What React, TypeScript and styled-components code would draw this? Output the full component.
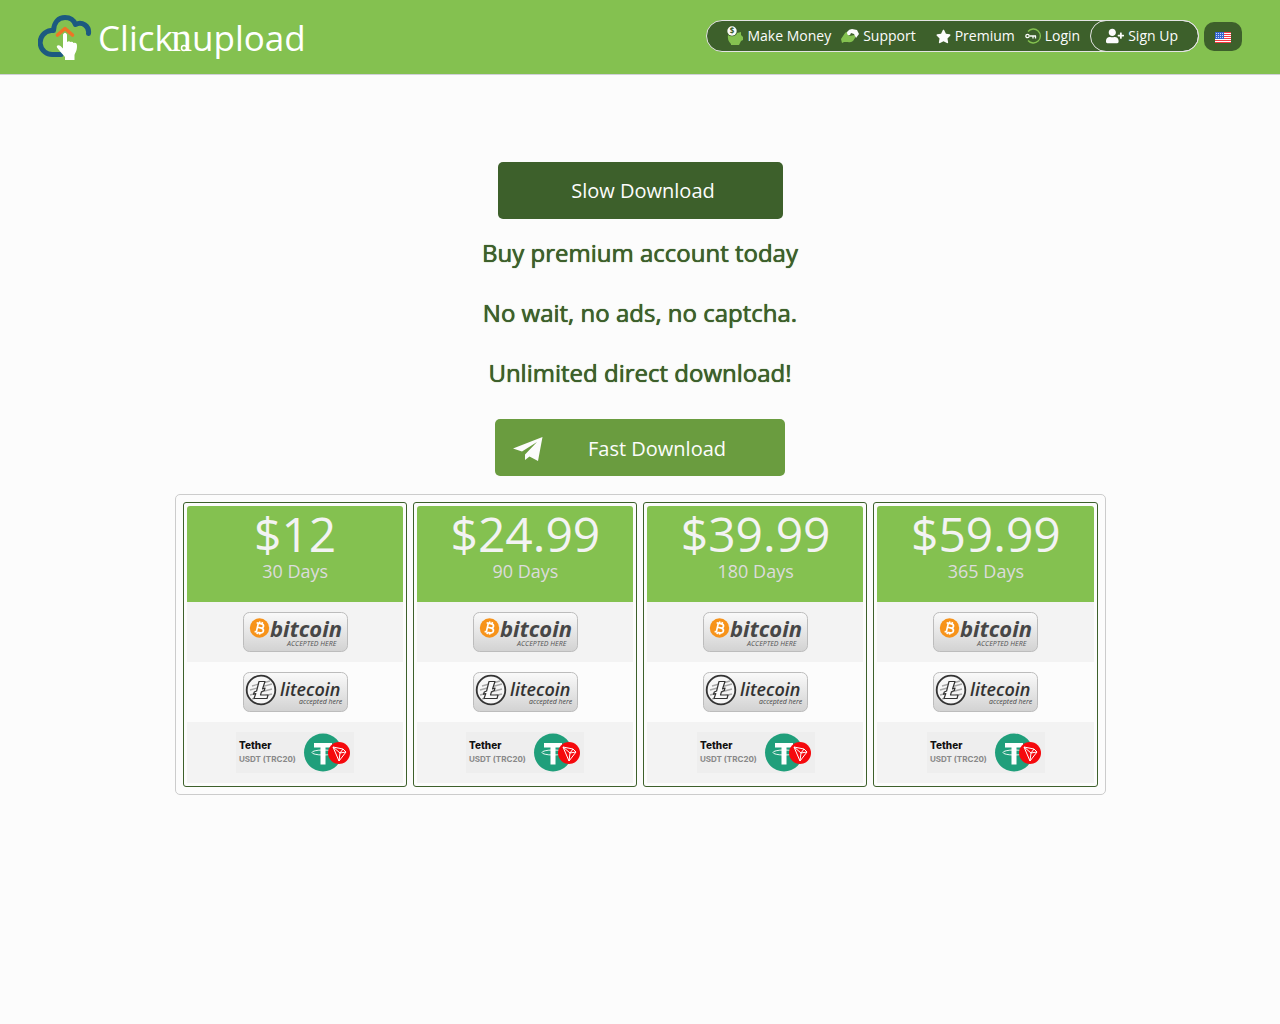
import React from "react";
import styled, { createGlobalStyle } from "styled-components";
import { FaStar, FaUserPlus } from "react-icons/fa";

const GlobalStyle = createGlobalStyle`
  * { box-sizing: border-box; }
  body {
    margin: 0;
    background: #fcfcfc;
    color: #3d602b;
    font-family: "Open Sans", "Liberation Sans", sans-serif;
    font-size: 14px;
  }
  svg { display: block; flex: none; }
`;

const Header = styled.header`
  display: flex;
  align-items: center;
  justify-content: space-between;
  height: 75px;
  padding: 0 38px 2px;
  background: #84c150;
  border-bottom: 1px solid #d0d0d8;
`;

const Bar = styled.div`
  display: flex;
  align-items: center;
  gap: 5px;
`;

const Nav = styled.nav`
  display: flex;
  align-items: center;
  height: 32px;
  padding-left: 20px;
  background: #3d602b;
  border: 1px solid #e4e4e4;
  border-radius: 16px;
`;

const NavLink = styled.a<{ $gap?: number }>`
  display: flex;
  align-items: center;
  gap: 4px;
  margin-right: ${(p) => p.$gap ?? 10}px;
  color: #fcfcfc;
  line-height: 20px;
  text-decoration: none;
`;

const SignUp = styled(NavLink)`
  height: 32px;
  margin: -1px;
  padding: 0 20px 0 15px;
  border: 1px solid #e4e4e4;
  border-radius: 16px;
`;

const LangButton = styled.button`
  display: flex;
  align-items: center;
  justify-content: center;
  width: 38px;
  height: 29px;
  margin-top: 1px;
  padding: 2px 0 0;
  border: 0;
  border-radius: 10px;
  background: #3d602b;
`;

const Main = styled.main`
  display: flex;
  flex-direction: column;
  align-items: center;
  padding: 87px 20px 40px;
`;

const SlowButton = styled.button`
  width: 285px;
  height: 57px;
  padding: 0 0 0 6px;
  border: 0;
  border-radius: 5px;
  background: #3d602b;
  color: #fcfcfc;
  font: 400 20px "Open Sans", sans-serif;
`;

const FastButton = styled(SlowButton)`
  display: flex;
  align-items: center;
  gap: 45px;
  width: 290px;
  padding: 2px 18px 0;
  background: #6a9c3f;
`;

const Pitch = styled.h2`
  margin: 0;
  padding: 4px 0 16px;
  font: 400 24px/60px "Open Sans", sans-serif;
  text-align: center;
  text-shadow: 0 0 1px currentColor, 0 0 0 currentColor;
`;

const Line = styled.span`
  display: block;
`;

const Plans = styled.section`
  display: grid;
  grid-template-columns: repeat(4, 1fr);
  gap: 6px;
  width: 100%;
  max-width: 931px;
  margin-top: 18px;
  padding: 7px;
  border: 1px solid #ccc;
  border-radius: 5px;
`;

const Plan = styled.article`
  padding: 3px;
  border: 1px solid #3d602b;
  border-radius: 3px;
`;

const PlanHead = styled.header`
  height: 96px;
  padding-left: 1px;
  border-radius: 3px 3px 0 0;
  background: #84c150;
  text-align: center;
`;

const Price = styled.div`
  color: #f3f3f3;
  font: 400 48px/56px "Open Sans", sans-serif;
`;

const Days = styled.div`
  color: #dcdcdc;
  font: 400 18px/18px "Open Sans", sans-serif;
`;

const PayButton = styled.button`
  display: flex;
  align-items: center;
  justify-content: center;
  width: 100%;
  height: 60px;
  padding: 0 0 0 1px;
  border: 0;
  background: #f3f3f3;
  &:nth-of-type(2) { background: #fcfcfc; }
  &:last-of-type { height: 61px; }
`;

const Logo = () => (
  <svg width="270" height="50" viewBox="38 11 270 50" role="img" aria-label="Clicknupload">
    <path d="M61 54.500H53.500A11.500 11.500 0 0 1 51 30.500H53.500C54 22 58.500 17.500 65 17.500C70.500 17.500 74 20.500 75.500 24.500C82 21 89.500 26 88.500 33.500" fill="none" stroke="#1c5a80" strokeWidth="5" strokeLinecap="round" strokeLinejoin="round" />
    <path d="M57.500 35L65 28.500L72.500 35" fill="none" stroke="#ee7426" strokeWidth="3.600" strokeLinecap="round" strokeLinejoin="round" />
    <path d="M63 34.500Q65 31 67 34.500V42Q69 40.500 70.500 42Q72.500 41 73.500 43Q77 42 77 46C77 51 75.500 52 74.500 55V60H65V57C62.500 54 59.500 51 57 47.500C56 45 59 44.500 60.500 46L63 48.500Z" fill="#fff" />
    <g fill="#fff" fontFamily="Open Sans" fontSize="35">
      <text x="98" y="51">Click</text>
      <text x="171" y="51" fontFamily="Liberation Serif" fontSize="42">n</text>
      <text x="192" y="51">upload</text>
    </g>
    <circle cx="184" cy="48" r="2.500" fill="#84c150" stroke="#fff" strokeWidth="1.500" />
  </svg>
);

const PiggyIcon = () => (
  <svg width="16" height="20" viewBox="0 0 16 20">
    <path d="M1 9Q3 11 7 10Q10 9 10 7L14 6V9L16 11V14L14 15L12 19H4V18Q0 14 1 9Z" fill="#84c150" />
    <circle cx="5" cy="5" r="4.700" fill="#fcfcfc" />
    <text x="5" y="8" fontFamily="Open Sans" fontWeight="700" fontSize="8" textAnchor="middle" fill="#3d602b">$</text>
  </svg>
);

const HandsIcon = () => (
  <svg width="18" height="16" viewBox="0 0 18 16">
    <path d="M0 11L4 5Q6 3 7 5L8 8L14 7V10L12 13Q9 15 7 14H3L1 15Z" fill="#84c150" />
    <path d="M6 4Q8 1 11 1L16 2L18 6L15 10L13 6L10 5L9 7Q6 8 6 4Z" fill="#fcfcfc" />
  </svg>
);

const KeyIcon = () => (
  <svg width="16" height="16" viewBox="0 0 16 16" fill="none">
    <path d="M3 3.500A7 7 0 1 1 3 12.500" stroke="#84c150" strokeWidth="1.300" />
    <circle cx="2.500" cy="8" r="1.700" stroke="#fcfcfc" strokeWidth="1.200" />
    <path d="M4.500 8H11M8 8V10.500M10.500 8V10.500" stroke="#fcfcfc" strokeWidth="1.300" />
  </svg>
);

const FlagIcon = () => (
  <svg width="16" height="11" viewBox="0 0 16 11">
    <rect width="16" height="11" fill="#fff" />
    {[0, 2, 4, 6, 8, 10].map((y) => (
      <rect key={y} y={y} width="16" height="1" fill="#f33b42" />
    ))}
    <rect width="9" height="7" fill="#3465d0" />
    {[1, 3, 5].flatMap((y) => [1, 3, 5, 7].map((x) => <rect key={`${x}-${y}`} x={x} y={y} width="1" height="1" fill="#c9d8f6" />))}
  </svg>
);

const PlaneIcon = () => (
  <svg width="30" height="24" viewBox="0 0 30 24">
    <path d="M0 11.500L29.500 0L25 24L16.500 19.500L12 23V17.500L24 5L9 14.500Z" fill="#fcfcfc" />
  </svg>
);

const BadgeBase = ({ id }: { id: string }) => (
  <>
    <defs>
      <linearGradient id={id} x2="0" y2="1">
        <stop offset="0" stopColor="#fafafa" />
        <stop offset="1" stopColor="#d2d2d2" />
      </linearGradient>
    </defs>
    <rect x="0.500" y="0.500" width="104" height="39" rx="6" fill={`url(#${id})`} stroke="#bcbcbc" />
  </>
);

const BitcoinBadge = ({ id }: { id: string }) => (
  <svg width="105" height="40" viewBox="0 0 105 40" role="img" aria-label="bitcoin accepted here">
    <BadgeBase id={`btc-${id}`} />
    <circle cx="16.500" cy="16" r="9.700" fill="#f7931a" />
    <g transform="rotate(13 16.500 16)" fill="none" stroke="#fff" strokeWidth="1.700">
      <path d="M12.500 11.500H17.500Q20 11.500 20 13.700Q20 15.700 17.500 15.700H14.500M17.500 15.700Q21 15.700 21 18.200Q21 20.500 18 20.500H12.500M14.300 11.500V20.500M15.500 9.500V11.500M18 9.500V11.500M15.500 20.500V22.500M18 20.500V22.500" />
    </g>
    <text x="27" y="25" fontFamily="Open Sans" fontWeight="700" fontStyle="italic" fontSize="22" fill="#474747">bitcoin</text>
    <text x="44" y="34" fontFamily="Open Sans" fontWeight="500" fontStyle="italic" fontSize="7" fill="#555">ACCEPTED HERE</text>
  </svg>
);

const LitecoinBadge = ({ id }: { id: string }) => (
  <svg width="105" height="40" viewBox="0 0 105 40" role="img" aria-label="litecoin accepted here">
    <BadgeBase id={`ltc-${id}`} />
    <circle cx="18" cy="18" r="14.300" fill="#f6f6f6" stroke="#333" strokeWidth="1.800" />
    <path d="M9 14L27 9M7 18L29 12M7 23L29 17M9 27L29 22" stroke="#a8a8a8" strokeWidth="1.300" />
    <path d="M16 9.500H22L19.500 17L22 16L21.300 18.500L18.500 19.700L17.500 23H25L24 26.500H11L12.800 21.500L10.500 22.300L11.300 20L13.600 19Z" fill="#fafafa" stroke="#333" strokeWidth="1.200" strokeLinejoin="round" />
    <text x="37" y="24" fontFamily="Open Sans" fontWeight="600" fontStyle="italic" fontSize="18" fill="#333">litecoin</text>
    <text x="56" y="32" fontFamily="Open Sans" fontWeight="500" fontStyle="italic" fontSize="7" fill="#444">accepted here</text>
  </svg>
);

const TetherBadge = () => (
  <svg width="118" height="41" viewBox="0 0 118 41" role="img" aria-label="Tether USDT (TRC20)">
    <rect width="118" height="41" fill="#eee" />
    <g fontFamily="Inter, Open Sans">
      <text x="3" y="17" fontWeight="800" fontSize="10" fill="#111">Tether</text>
      <text x="3" y="30" fontWeight="700" fontSize="8" fill="#888">USDT (TRC20)</text>
    </g>
    <circle cx="87" cy="20.500" r="19" fill="#209f7b" />
    <path d="M78 11H96V15.500H89.500V32.500H84.500V15.500H78Z" fill="#fff" />
    <ellipse cx="87" cy="20.500" rx="11" ry="2.500" fill="none" stroke="#fff" strokeWidth="0.900" />
    <circle cx="103" cy="21" r="11" fill="#f5090d" />
    <path d="M97 15L107 17L110 20L103 29ZM97 15L104 21L110 20M107 17L104 21L103 29" fill="none" stroke="#fff" strokeWidth="1" strokeLinejoin="round" />
  </svg>
);

const plans = [
  { price: "$12", days: "30 Days" },
  { price: "$24.99", days: "90 Days" },
  { price: "$39.99", days: "180 Days" },
  { price: "$59.99", days: "365 Days" },
];

export default function App() {
  return (
    <>
      <GlobalStyle />
      <Header>
        <a href="#home"><Logo /></a>
        <Bar>
          <Nav>
            <NavLink href="#money"><PiggyIcon />Make Money</NavLink>
            <NavLink href="#support" $gap={20}><HandsIcon />Support</NavLink>
            <NavLink href="#premium"><FaStar size={15} />Premium</NavLink>
            <NavLink href="#login" $gap={11}><KeyIcon />Login</NavLink>
            <SignUp href="#signup"><FaUserPlus size={18} />Sign Up</SignUp>
          </Nav>
          <LangButton type="button" aria-label="Language"><FlagIcon /></LangButton>
        </Bar>
      </Header>
      <Main>
        <SlowButton type="button">Slow Download</SlowButton>
        <Pitch>
          <Line>Buy premium account today</Line>
          <Line>No wait, no ads, no captcha.</Line>
          <Line>Unlimited direct download!</Line>
        </Pitch>
        <FastButton type="button"><PlaneIcon />Fast Download</FastButton>
        <Plans>
          {plans.map((plan) => (
            <Plan key={plan.days}>
              <PlanHead>
                <Price>{plan.price}</Price>
                <Days>{plan.days}</Days>
              </PlanHead>
              <PayButton type="button"><BitcoinBadge id={plan.price.slice(1, 3)} /></PayButton>
              <PayButton type="button"><LitecoinBadge id={plan.price.slice(1, 3)} /></PayButton>
              <PayButton type="button"><TetherBadge /></PayButton>
            </Plan>
          ))}
        </Plans>
      </Main>
    </>
  );
}
